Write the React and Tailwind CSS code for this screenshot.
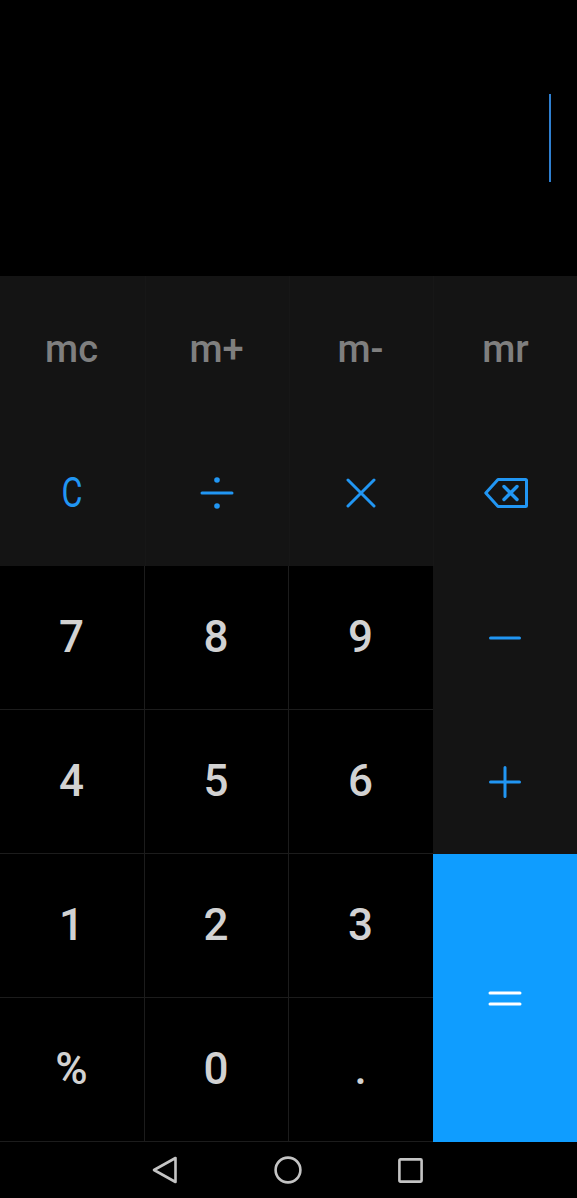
const blue = "#2196f3";

function Divide() {
  return (
    <svg width="34" height="34" viewBox="0 0 34 34" fill="none" stroke={blue} strokeWidth="3" strokeLinecap="round">
      <path d="M2 17h30" />
      <circle cx="17" cy="4" r="2.8" fill={blue} stroke="none" />
      <circle cx="17" cy="30" r="2.8" fill={blue} stroke="none" />
    </svg>
  );
}

function Times() {
  return (
    <svg width="30" height="30" viewBox="0 0 30 30" fill="none" stroke={blue} strokeWidth="3" strokeLinecap="round">
      <path d="M2 2l26 26M28 2L2 28" />
    </svg>
  );
}

function Backspace() {
  return (
    <svg width="44" height="30" viewBox="0 0 44 30" fill="none" stroke={blue} strokeWidth="3" strokeLinejoin="round" strokeLinecap="round">
      <path d="M14 1.5h27.5a1 1 0 0 1 1 1v25a1 1 0 0 1-1 1H14L1.8 15z" />
      <path d="M20 8.5l13 13M33 8.5l-13 13" strokeWidth="3.4" />
    </svg>
  );
}

function Minus() {
  return (
    <svg width="32" height="4" viewBox="0 0 32 4" stroke={blue} strokeWidth="3" strokeLinecap="round">
      <path d="M1.5 2h29" />
    </svg>
  );
}

function Plus() {
  return (
    <svg width="32" height="32" viewBox="0 0 32 32" fill="none" stroke={blue} strokeWidth="3" strokeLinecap="round">
      <path d="M1.5 16h29M16 1.5v29" />
    </svg>
  );
}

function Equals() {
  return (
    <svg width="34" height="16" viewBox="0 0 34 16" stroke="#ffffff" strokeWidth="3" strokeLinecap="round">
      <path d="M2 3h30M2 14h30" />
    </svg>
  );
}

function TopCell({ children, last }) {
  return (
    <div className={`flex items-center justify-center ${last ? "" : "border-r border-[#171717] pr-[2px]"}`}>
      {children}
    </div>
  );
}

function NumKey({ label, right, bottom }) {
  return (
    <div
      className={`flex items-center justify-center pb-[2px] pr-[1px] text-[44px] font-medium text-[#d2d2d2] ${right ? "border-r border-[#1c1c1c]" : ""} ${bottom ? "border-b border-[#1c1c1c]" : ""}`}
    >
      {label}
    </div>
  );
}

export default function App() {
  const memory = ["mc", "m+", "m-", "mr"];
  const numbers = ["7", "8", "9", "4", "5", "6", "1", "2", "3", "%", "0", "."];

  return (
    <div className="w-[577px] h-[1198px] bg-black flex flex-col overflow-hidden font-['Roboto',sans-serif]">
      {/* Display */}
      <div className="h-[276px] flex justify-end pt-[94px] pr-[26px]">
        <div className="w-[2px] h-[88px] bg-[#2f7fd0]" />
      </div>

      {/* Memory and operator rows */}
      <div className="h-[290px] bg-[#141414] grid grid-cols-[146px_144px_144px_143px] grid-rows-2">
        {memory.map((m, i) => (
          <TopCell key={m} last={i === 3}>
            <span className="text-[38px] font-medium text-[#7f7f7f] leading-none">{m}</span>
          </TopCell>
        ))}
        <TopCell>
          <span className="pb-[2px] text-[43px] text-[#2196f3] leading-none scale-x-[0.75]">C</span>
        </TopCell>
        <TopCell>
          <div className="pb-[2px]"><Divide /></div>
        </TopCell>
        <TopCell>
          <div className="pb-[2px]"><Times /></div>
        </TopCell>
        <TopCell last>
          <div className="pb-[2px]"><Backspace /></div>
        </TopCell>
      </div>

      {/* Number pad */}
      <div className="h-[576px] flex">
        <div className="w-[433px] grid grid-cols-[145px_144px_144px] grid-rows-4">
          {numbers.map((n, i) => (
            <NumKey key={n} label={n} right={i % 3 !== 2} bottom />
          ))}
        </div>
        <div className="flex-1 flex flex-col">
          <div className="h-[144px] bg-[#141414] flex items-center justify-center"><Minus /></div>
          <div className="h-[144px] bg-[#141414] flex items-center justify-center"><Plus /></div>
          <div className="flex-1 bg-[#0f9dff] flex items-center justify-center"><Equals /></div>
        </div>
      </div>

      {/* Android nav bar */}
      <div className="flex-1 flex items-center justify-center gap-[96px] pr-[2px]">
        <svg width="26" height="28" viewBox="0 0 26 28" fill="none" stroke="#c4c4c4" strokeWidth="2.6" strokeLinejoin="round">
          <path d="M23.5 2v24L2 14z" />
        </svg>
        <svg width="28" height="28" viewBox="0 0 28 28" fill="none" stroke="#c4c4c4" strokeWidth="2.6">
          <circle cx="14" cy="14" r="12.4" />
        </svg>
        <svg width="25" height="25" viewBox="0 0 25 25" fill="none" stroke="#c4c4c4" strokeWidth="2.6" strokeLinejoin="round">
          <rect x="1.4" y="1.4" width="22.2" height="22.2" rx="1" />
        </svg>
      </div>
    </div>
  );
}
